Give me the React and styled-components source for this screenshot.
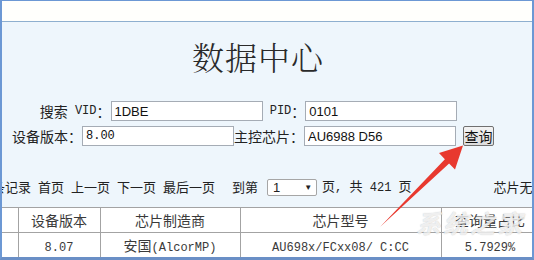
import styled, { createGlobalStyle } from 'styled-components';

const GlobalStyle = createGlobalStyle`
	html, body {
		margin: 0;
		padding: 0;
		background: #fff;
	}
	body {
		font-family: "Noto Sans CJK SC", "Liberation Sans", sans-serif;
		color: #222;
	}
`;

const Frame = styled.div`
	position: relative;
	width: 534px;
	height: 260px;
	box-sizing: border-box;
	border: 2px solid #6c98d4;
	border-top-width: 1px;
	border-bottom: 3px solid #6a8fc6;
	background: #eef6fc;
	overflow: hidden;
	display: flex;
	flex-direction: column;
`;

const TopStrip = styled.div`
	flex-shrink: 0;
	height: 20px;
	background: #fffffc;
	border-bottom: 1px solid #8eafcf;
`;

const SearchArea = styled.div`
	display: flex;
	flex-direction: column;
	align-items: center;
	padding-right: 28px;
`;

const Title = styled.h1`
	margin: 14px 0 0;
	padding-left: 10px;
	font-family: "Noto Serif CJK SC", "Noto Sans CJK SC", serif;
	font-size: 32px;
	font-weight: 300;
	line-height: 40px;
	letter-spacing: 1px;
	color: #2a2a2a;
`;

const FormRow = styled.div`
	display: flex;
	align-items: center;
	height: 20px;
	margin-top: ${props => props.$top}px;
	padding-right: ${props => props.$pad || 0}px;
	font-size: 14px;
	white-space: nowrap;
`;

const Label = styled.span`
	font-size: 14px;
	line-height: 20px;
	color: #222;
`;

const Mono = styled.span`
	font-family: "Liberation Mono", monospace;
	font-size: 12px;
	white-space: pre;
`;

const TextInput = styled.input`
	width: 152px;
	height: 20px;
	box-sizing: border-box;
	margin: 0;
	padding: 0 3px;
	border: 1px solid #a5acb5;
	background: #fff;
	color: #111;
	font-family: ${props => props.$mono ? '"Liberation Mono", monospace' : '"Liberation Sans", sans-serif'};
	font-size: ${props => props.$mono ? 12 : 13}px;
	outline: none;
`;

const QueryButton = styled.button`
	width: 31px;
	height: 20px;
	margin: 0 0 0 7px;
	padding: 0;
	border: 1px solid #707070;
	border-radius: 2px;
	background: linear-gradient(#f4f4f4, #dcdcdc);
	font-family: "Noto Sans CJK SC", sans-serif;
	font-size: 14px;
	line-height: 18px;
	color: #111;
`;

const Pager = styled.div`
	display: flex;
	align-items: center;
	height: 18px;
	margin: 32px 0 0 -10px;
	font-size: 13px;
	white-space: nowrap;
	color: #222;
`;

const PagerItem = styled.span`
	flex-shrink: 0;
	margin-left: ${props => props.$gap || 0}px;
	line-height: 18px;
`;

const PageSelect = styled.div`
	flex-shrink: 0;
	display: flex;
	align-items: center;
	justify-content: space-between;
	width: 50px;
	height: 17px;
	box-sizing: border-box;
	margin-left: 9px;
	padding: 0 4px 0 5px;
	border: 1px solid #a6a6a6;
	border-radius: 2px;
	background: #fff;
	font-family: "Liberation Sans", sans-serif;
	font-size: 13px;
`;

const SelectArrow = styled.span`
	font-size: 8px;
	color: #222;
`;

const Table = styled.table`
	margin-top: 11px;
	border-collapse: collapse;
	table-layout: fixed;
	width: 617px;
	background: #fff;
	flex-shrink: 0;
`;

const Row = styled.tr`
	height: 25px;
`;

const Cell = styled.td`
	padding: 0;
	border: 1px solid #a3a3a3;
	text-align: center;
	font-size: 14px;
	color: #3a3a3a;
	white-space: nowrap;
	overflow: hidden;

	&:first-child {
		border-left: none;
	}
`;

const Watermark = styled.div`
	position: absolute;
	left: 414px;
	top: 203px;
	font-size: 25px;
	font-weight: 700;
	font-style: italic;
	letter-spacing: 2px;
	color: rgba(255, 255, 255, 0.75);
	text-shadow: 0 0 1px rgba(110, 110, 110, 0.45);
	pointer-events: none;
`;

const ArrowLayer = styled.svg`
	position: absolute;
	left: -2px;
	top: -1px;
	width: 534px;
	height: 260px;
	pointer-events: none;
`;

const columns = [16, 82, 140, 201, 98, 80];

const App = () => {
	return (
		<>
			<GlobalStyle />
			<Frame>
				<TopStrip />
				<SearchArea>
					<Title>数据中心</Title>
					<FormRow $top={25} $pad={9}>
						<Label>搜索</Label>
						<Mono> VID</Mono>
						<Label>：</Label>
						<TextInput readOnly defaultValue="1DBE" />
						<Mono> PID</Mono>
						<Label>：</Label>
						<TextInput readOnly defaultValue="0101" />
					</FormRow>
					<FormRow $top={5}>
						<Label>设备版本：</Label>
						<TextInput $mono readOnly defaultValue="8.00" />
						<Label>主控芯片：</Label>
						<TextInput readOnly defaultValue="AU6988 D56" />
						<QueryButton>查询</QueryButton>
					</FormRow>
				</SearchArea>
				<Pager>
					<PagerItem>条记录</PagerItem>
					<PagerItem $gap={7}>首页</PagerItem>
					<PagerItem $gap={7}>上一页</PagerItem>
					<PagerItem $gap={7}>下一页</PagerItem>
					<PagerItem $gap={7}>最后一页</PagerItem>
					<PagerItem $gap={17}>到第</PagerItem>
					<PageSelect>
						<span>1</span>
						<SelectArrow>▼</SelectArrow>
					</PageSelect>
					<PagerItem $gap={5}>
						页<Mono>, </Mono>共<Mono> 421 </Mono>页
					</PagerItem>
					<PagerItem $gap={82}>芯片无忧</PagerItem>
				</Pager>
				<Table>
					<colgroup>
						{columns.map((w, i) => <col key={i} style={{ width: w }} />)}
					</colgroup>
					<tbody>
						<Row>
							<Cell />
							<Cell>设备版本</Cell>
							<Cell>芯片制造商</Cell>
							<Cell>芯片型号</Cell>
							<Cell>查询量占比</Cell>
							<Cell />
						</Row>
						<Row>
							<Cell />
							<Cell><Mono>8.07</Mono></Cell>
							<Cell>安国<Mono>(AlcorMP)</Mono></Cell>
							<Cell><Mono>AU698x/FCxx08/ C:CC</Mono></Cell>
							<Cell><Mono>5.7929%</Mono></Cell>
							<Cell />
						</Row>
					</tbody>
				</Table>
				<Watermark>系统之家</Watermark>
				<ArrowLayer viewBox="0 0 534 260">
					<polygon
						points="380,227 444.9,159.3 439,153 463,145.5 455,169.5 449.1,163.6"
						fill="#e8392f"
					/>
				</ArrowLayer>
			</Frame>
		</>
	);
};

export default App;
